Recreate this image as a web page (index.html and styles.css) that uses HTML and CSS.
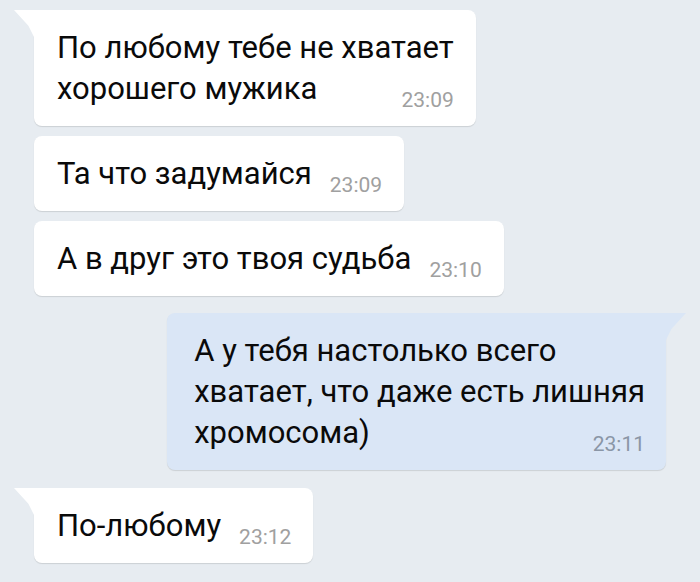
FILE: index.html
```html
<!DOCTYPE html>
<html lang="ru">
<head>
    <meta charset="UTF-8">
    <meta name="viewport" content="width=device-width, initial-scale=1.0">
    <title>Диалог</title>
    <link rel="stylesheet" href="styles.css">
</head>
<body>
    <div class="chat">
        <div class="msg in tail">
            <span class="text">По любому тебе не хватает<br>хорошего мужика</span><span class="time">23:09</span>
        </div>
        <div class="msg in">
            <span class="text">Та что задумайся</span><span class="time">23:09</span>
        </div>
        <div class="msg in">
            <span class="text">А в друг это твоя судьба</span><span class="time">23:10</span>
        </div>
        <div class="msg out tail group">
            <span class="text">А у тебя настолько всего<br>хватает, что даже есть лишняя<br>хромосома)</span><span class="time">23:11</span>
        </div>
        <div class="msg in tail group">
            <span class="text">По-любому</span><span class="time">23:12</span>
        </div>
    </div>
</body>
</html>
```

FILE: styles.css
```css
body {
    margin: 0;
    background-color: #e7ecf1;
    font-family: Roboto, "Liberation Sans", sans-serif;
    color: #0a0a0a;
}
.chat {
    display: flex;
    flex-direction: column;
    align-items: flex-start;
    padding: 10px 34px;
}
.msg {
    position: relative;
    display: inline-block;
    background-color: #ffffff;
    border-radius: 8px;
    padding: 17px 22px 17px 23px;
    font-size: 31px;
    line-height: 41px;
    box-shadow: 0 1px 1px rgba(0, 0, 0, 0.12);
    margin-top: 10px;
}
.msg:first-child {
    margin-top: 0;
}
.msg.group {
    margin-top: 17px;
}
.msg.group:last-child {
    margin-top: 18px;
}
.time {
    float: right;
    margin: 24px 0 0 18px;
    font-size: 21px;
    line-height: 17px;
    color: #a0a0a0;
}
.out {
    align-self: flex-end;
    background-color: #dae6f6;
    padding-right: 21px;
    padding-left: 27px;
}
.out .time {
    color: #8a96a6;
}
.in.tail {
    border-top-left-radius: 0;
}
.out.tail {
    border-top-right-radius: 0;
}
.tail::before {
    content: "";
    position: absolute;
    top: 0;
    width: 20px;
    height: 27px;
    background-color: inherit;
}
.in.tail::before {
    left: -20px;
    clip-path: polygon(0 0, 100% 0, 100% 100%, 72% 58%);
}
.out.tail::before {
    right: -20px;
    clip-path: polygon(0 0, 100% 0, 28% 58%, 0 100%);
}
```
